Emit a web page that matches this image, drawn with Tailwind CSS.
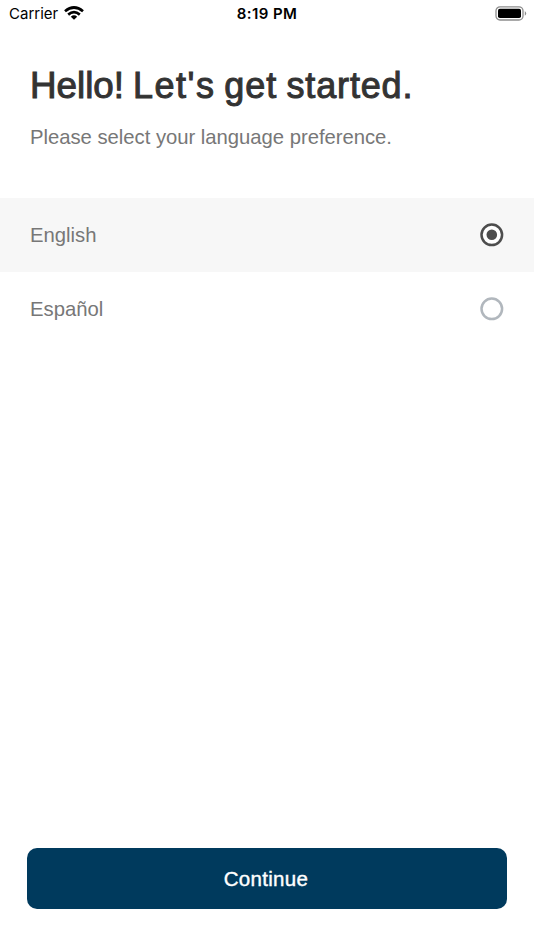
<!DOCTYPE html>
<html lang="en"><head><meta charset="utf-8"><title>Language preference</title><script src="https://cdn.jsdelivr.net/npm/@tailwindcss/browser@4"></script></head>
<body class="bg-white">
<main class="flex h-[950px] w-[534px] flex-col overflow-hidden font-['Liberation_Sans',sans-serif]">
<header class="grid h-7 grid-cols-3 items-center pl-[9px] pr-[7px] font-['Inter',sans-serif] text-black">
<div class="flex items-center gap-[6px] text-[15px]"><span class="pt-px">Carrier</span>
<svg class="-mt-[3px]" width="20" height="14" viewBox="0 0 20 14" fill="none" stroke="#000" stroke-width="2.7"><path d="M1 5.2Q10-2.2 19 5.2M4.2 8.6Q10 3.8 15.8 8.6"/><path d="M10 13.8 6.8 10.7Q10 8 13.2 10.7Z" fill="#000" stroke="none"/></svg></div>
<span class="whitespace-nowrap pr-[2px] pt-px text-center text-[15px] font-semibold tracking-[0.43px]">8:19 PM</span>
<svg class="-mt-[2px] justify-self-end" width="32" height="15" viewBox="0 0 32 15"><rect x="1" y=".8" width="27" height="13.2" rx="4" fill="none" stroke="#8d8d8d" stroke-width="1.3"/><rect x="3" y="2.8" width="23" height="9.2" rx="1.8" fill="#000"/><path d="M29.8 5q2.8 2.4 0 4.8z" fill="#8d8d8d"/></svg>
</header>
<section class="h-[170px] pl-[30px] pt-9">
<h1><svg class="block overflow-visible" width="382" height="42"><g font-size="36" fill="#333" stroke="#333" stroke-width="1"><text y="33.5"><tspan x="0" textLength="94" lengthAdjust="spacingAndGlyphs">Hello!</tspan> <tspan x="103" textLength="81">Let's</tspan> <tspan x="194.3" textLength="52">get</tspan> <tspan x="256.5" textLength="126">started.</tspan></text></g></svg></h1>
<p class="mt-[19px]"><svg class="block overflow-visible" width="362" height="26"><text x="0" y="19" textLength="362" font-size="20.3" fill="#777">Please select your language preference.</text></svg></p>
</section>
<div class="flex h-[74px] items-center justify-between bg-[#f7f7f7] px-[30px] text-[20.3px] text-[#777]"><span class="pt-px">English</span><svg width="24" height="24"><circle cx="11.8" cy="11.8" r="10.3" fill="white" stroke="#4d4d4d" stroke-width="2.5"/><circle cx="11.8" cy="11.8" r="5.3" fill="#4d4d4d"/></svg></div>
<div class="flex h-[74px] items-center justify-between px-[30px] text-[20.3px] text-[#777]"><span class="pt-px">Español</span><svg width="24" height="24"><circle cx="11.8" cy="11.8" r="10.3" fill="white" stroke="#b1b7bd" stroke-width="2.5"/></svg></div>
<button class="mx-[27px] mb-[41px] mt-auto h-[61px] rounded-[10px] bg-[#003a5d] pr-[2px] pt-[2px] text-[20.5px] tracking-[0.3px] text-white [-webkit-text-stroke:0.4px_white]">Continue</button>
</main></body></html>
